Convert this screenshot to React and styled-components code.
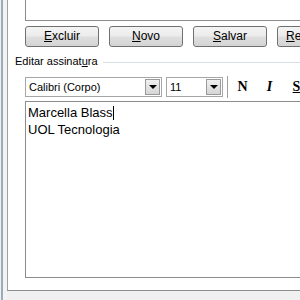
import React from "react";
import styled, { createGlobalStyle } from "styled-components";

const Global = createGlobalStyle`
  html, body { margin: 0; padding: 0; }
  body { width: 300px; height: 300px; overflow: hidden; background: #f0f0f0; }
`;

const Root = styled.div`
  display: flex;
  width: 300px;
  height: 300px;
  background: #f0f0f0;
  padding-left: 1px;
  box-sizing: border-box;
  font-family: "Liberation Sans", Arial, sans-serif;
  color: #000;
`;

const Edge = styled.div`
  width: 6px;
  flex: none;
  border-left: 2px solid #9aabbb;
  box-sizing: border-box;
  background: #f3f3f3;
`;

const Panel = styled.div`
  flex: 1;
  height: 291px;
  box-sizing: border-box;
  background: #fff;
  border-left: 1px solid #a0a0a0;
  border-bottom: 1px solid #8c8c8c;
  padding-left: 17px;
  overflow: hidden;
  display: flex;
  flex-direction: column;
`;

const TopBox = styled.div`
  height: 21px;
  width: 300px;
  flex: none;
  box-sizing: border-box;
  border: 1px solid #8c8c8c;
  border-top: none;
  border-right: none;
  background: #fff;
`;

const ButtonRow = styled.div`
  display: flex;
  gap: 10px;
  margin-top: 5px;
  flex: none;
`;

const Button = styled.button`
  width: 74px;
  height: 21px;
  flex: none;
  box-sizing: border-box;
  border: 1px solid #707070;
  border-radius: 3px;
  background: linear-gradient(#f4f4f4 0%, #ececec 45%, #dedede 55%, #d4d4d4 100%);
  font-family: "Liberation Sans", Arial, sans-serif;
  font-size: 12px;
  color: #000;
  padding: 0;
  margin: 0;
  line-height: 19px;
  text-align: center;
`;

const GroupHeader = styled.div`
  display: flex;
  align-items: center;
  gap: 5px;
  margin-left: -10px;
  margin-top: 7px;
  height: 14px;
  flex: none;
  font-size: 11px;
`;

const GroupLine = styled.div`
  flex: 1;
  height: 1px;
  background: #d5dfe5;
  margin-top: 2px;
`;

const Toolbar = styled.div`
  display: flex;
  align-items: center;
  margin-top: 8px;
  height: 21px;
  flex: none;
`;

const Combo = styled.div`
  width: ${(p) => p.$w}px;
  height: 20px;
  margin-right: ${(p) => p.$mr || 0}px;
  box-sizing: border-box;
  border: 1px solid #a6a6a6;
  background: #fff;
  display: flex;
  align-items: center;
  flex: none;
`;

const ComboText = styled.span`
  flex: 1;
  padding-left: 3px;
  font-size: 11px;
  white-space: nowrap;
`;

const ArrowBtn = styled.div`
  width: 15px;
  height: 16px;
  margin-right: 1px;
  box-sizing: border-box;
  border: 1px solid #9a9a9a;
  background: linear-gradient(#f0f0f0, #d6d6d6);
  display: flex;
  align-items: center;
  justify-content: center;
`;

const Tri = styled.div`
  width: 0;
  height: 0;
  border-left: 4px solid transparent;
  border-right: 4px solid transparent;
  border-top: 4px solid #000;
  margin-top: 1px;
`;

const Separator = styled.div`
  width: 1px;
  height: 22px;
  background: #a0a0a0;
  border-right: 1px solid #fff;
  margin-left: 4px;
  flex: none;
`;

const ToolBtn = styled.div`
  width: 27px;
  height: 21px;
  flex: none;
  display: flex;
  align-items: center;
  justify-content: center;
  font-family: "Liberation Serif", "Times New Roman", serif;
  font-size: 14px;
  font-weight: bold;
  font-style: ${(p) => (p.$italic ? "italic" : "normal")};
  text-decoration: ${(p) => (p.$under ? "underline" : "none")};
`;

const Editor = styled.div`
  margin-top: 4px;
  height: 177px;
  width: 300px;
  flex: none;
  box-sizing: border-box;
  border: 1px solid #8c8c8c;
  border-right: none;
  background: #fff;
  padding: 2px 0 0 2px;
  font-family: "Liberation Sans", Arial, sans-serif;
  font-size: 13px;
  line-height: 17px;
`;

const Line = styled.div`
  white-space: nowrap;
`;

const Caret = styled.span`
  display: inline-block;
  width: 0;
  height: 14px;
  border-left: 1px solid #000;
  vertical-align: -3px;
`;

export default function App() {
  return (
    <>
      <Global />
      <Root>
        <Edge />
        <Panel>
          <TopBox />
          <ButtonRow>
            <Button><u>E</u>xcluir</Button>
            <Button><u>N</u>ovo</Button>
            <Button><u>S</u>alvar</Button>
            <Button><u>R</u>enomear</Button>
          </ButtonRow>
          <GroupHeader>
            <span>Editar assinat<u>u</u>ra</span>
            <GroupLine />
          </GroupHeader>
          <Toolbar>
            <Combo $w={137} $mr={4}>
              <ComboText>Calibri (Corpo)</ComboText>
              <ArrowBtn><Tri /></ArrowBtn>
            </Combo>
            <Combo $w={57}>
              <ComboText>11</ComboText>
              <ArrowBtn><Tri /></ArrowBtn>
            </Combo>
            <Separator />
            <ToolBtn>N</ToolBtn>
            <ToolBtn $italic>I</ToolBtn>
            <ToolBtn $under>S</ToolBtn>
          </Toolbar>
          <Editor>
            <Line>Marcella Blass<Caret /></Line>
            <Line>UOL Tecnologia</Line>
          </Editor>
        </Panel>
      </Root>
    </>
  );
}
